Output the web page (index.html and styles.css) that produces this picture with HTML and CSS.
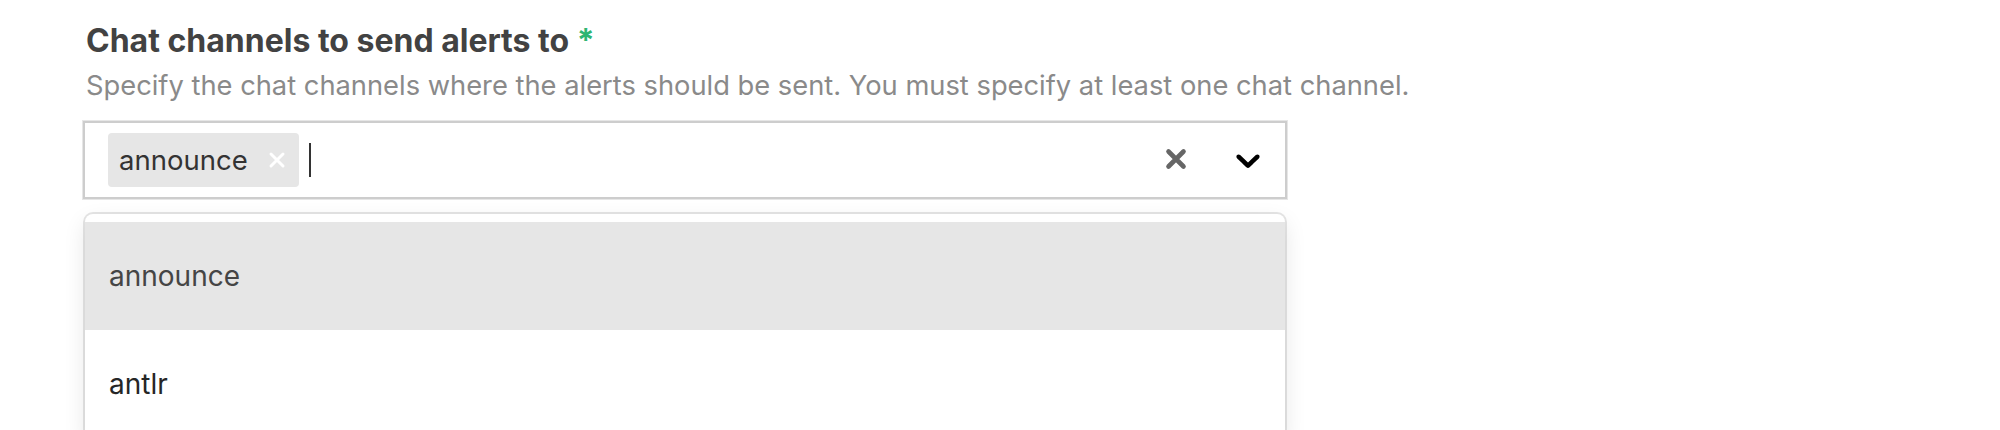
FILE: index.html
```html
<!DOCTYPE html>
<html>
<head>
<meta charset="utf-8">
<link rel="stylesheet" href="styles.css">
</head>
<body>
<div class="field">
  <label class="label">Chat channels to send alerts to <span class="req">*</span></label>
  <p class="desc">Specify the chat channels where the alerts should be sent. You must specify at least one chat channel.</p>
  <div class="select">
    <div class="control">
      <div class="values">
        <div class="chip">
          <span class="chip-label">announce</span>
          <span class="chip-remove">
            <svg viewBox="0 0 24 24" width="24" height="24"><path d="M6 6L18 18M18 6L6 18" stroke="#ffffff" stroke-width="3" stroke-linecap="round" fill="none"/></svg>
          </span>
        </div>
        <span class="caret"></span>
      </div>
      <div class="indicators">
        <span class="clear">
          <svg viewBox="0 0 24 24" width="24" height="24"><path d="M4.5 4.5L19.5 19.5M19.5 4.5L4.5 19.5" stroke="#666666" stroke-width="4.6" stroke-linecap="round" fill="none"/></svg>
        </span>
        <span class="dropdown">
          <svg viewBox="0 0 20 20" width="40" height="40"><path fill="#000000" d="M4.516 7.548c0.436-0.446 1.043-0.481 1.576 0l3.908 3.747 3.908-3.747c0.533-0.481 1.141-0.446 1.574 0 0.436 0.445 0.408 1.197 0 1.615-0.406 0.418-4.695 4.502-4.695 4.502-0.217 0.223-0.502 0.335-0.787 0.335s-0.57-0.112-0.789-0.335c0 0-4.287-4.084-4.695-4.502s-0.436-1.17 0-1.615z"/></svg>
        </span>
      </div>
    </div>
    <div class="menu">
      <div class="option focused">announce</div>
      <div class="option">antlr</div>
    </div>
  </div>
</div>
</body>
</html>
```
FILE: styles.css
```css
html, body {
  margin: 0;
  padding: 0;
  background: #ffffff;
  height: 430px;
  overflow: hidden;
}
.field {
  padding: 21px 0 0 83px;
  font-family: Inter, "Liberation Sans", sans-serif;
}
.label {
  display: block;
  margin-left: 3px;
  font-size: 32px;
  line-height: 40px;
  font-weight: 700;
  color: #424242;
}
.req {
  color: #2fb572;
}
.desc {
  margin: 8px 0 0 3px;
  font-size: 27.3px;
  line-height: 34px;
  color: #8a8a8a;
  white-space: nowrap;
}
.select {
  width: 1204px;
  margin-top: 18px;
}
.control {
  box-sizing: border-box;
  height: 78px;
  border: 2px solid #cdcdcd;
  box-shadow: 0 0 0 1px #e6e6e6;
  background: #fff;
  display: flex;
  align-items: center;
}
.values {
  flex: 1;
  display: flex;
  align-items: center;
  padding-left: 23px;
}
.chip {
  height: 54px;
  display: flex;
  align-items: center;
  background: #e6e6e6;
  border-radius: 4px;
}
.chip-label {
  padding-left: 11px;
  padding-right: 9px;
  font-size: 27.5px;
  color: #333333;
}
.chip-remove {
  display: flex;
  align-items: center;
  padding: 0 10px 0 8px;
}
.caret {
  width: 2px;
  height: 34px;
  margin-left: 10px;
  background: #333;
}
.indicators {
  display: flex;
  align-items: center;
  padding-right: 17px;
}
.clear {
  display: flex;
  margin-right: 40px;
  margin-top: -2px;
}
.dropdown {
  display: flex;
}
.menu {
  margin: 15px 2px 0;
  background: #fff;
  border-radius: 8px;
  box-shadow: 0 0 0 2px rgba(0,0,0,0.1), 0 8px 22px rgba(0,0,0,0.1);
  padding: 8px 0 0;
}
.option {
  height: 108px;
  display: flex;
  align-items: center;
  padding-left: 24px;
  font-size: 28px;
  color: #262626;
}
.option.focused {
  background: #e6e6e6;
  color: #454545;
}
```
